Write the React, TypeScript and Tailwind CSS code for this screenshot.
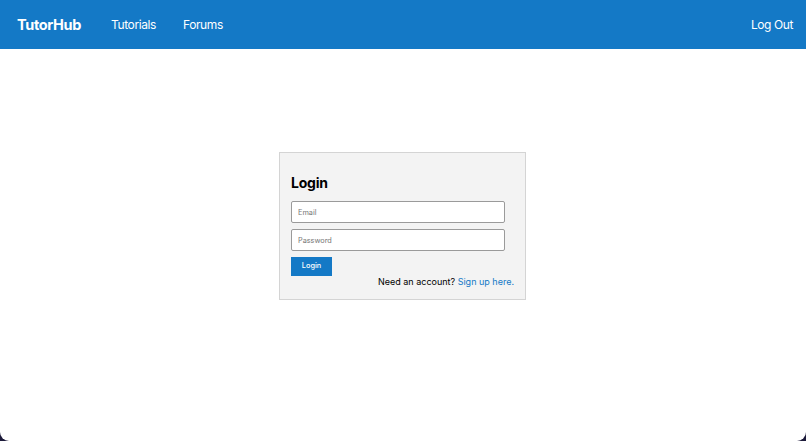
export default function App() {
  return (
    <div className="h-[441px] w-full bg-[#1c1a3a]">
      <div
        className="flex h-full flex-col overflow-hidden rounded-b-[9px] bg-white"
        style={{ fontFamily: "Inter, 'Liberation Sans', sans-serif" }}
      >
        <header className="flex h-[49px] shrink-0 items-center bg-[#1479c6] pl-[17px] pr-[13px] text-white">
          <span className="text-[14.5px] font-bold tracking-[-0.35px]">TutorHub</span>
          <nav className="ml-[30px] flex gap-[27px] text-[12px] tracking-[-0.4px]">
            <a>Tutorials</a>
            <a>Forums</a>
          </nav>
          <a className="ml-auto text-[12px] tracking-[-0.4px]">Log Out</a>
        </header>

        <main className="flex flex-1 justify-center pt-[103px]">
          <div className="ml-[-1px] h-[148px] w-[247px] border border-[#d4d4d4] bg-[#f3f3f3] px-[11px] pt-[21px]">
            <h2 className="text-[14px] font-bold leading-[18px] tracking-[-0.2px] text-black">Login</h2>
            <form className="mt-[9px] flex flex-col gap-[6px]">
              <input
                placeholder="Email"
                className="h-[22px] w-[214px] rounded-[2px] border border-[#9a9a9a] bg-white px-[6px] text-[7.3px] outline-none placeholder:text-[#767676]"
              />
              <input
                type="password"
                placeholder="Password"
                className="h-[22px] w-[214px] rounded-[2px] border border-[#9a9a9a] bg-white px-[6px] text-[7.3px] outline-none placeholder:text-[#767676]"
              />
              <button
                type="button"
                className="h-[19px] w-[41px] bg-[#1479c6] text-[7.3px] font-medium text-white"
              >
                Login
              </button>
            </form>
            <p className="text-right text-[9px] leading-[11px] text-black">
              Need an account? <a className="text-[#1479c6]">Sign up here.</a>
            </p>
          </div>
        </main>
      </div>
    </div>
  );
}
